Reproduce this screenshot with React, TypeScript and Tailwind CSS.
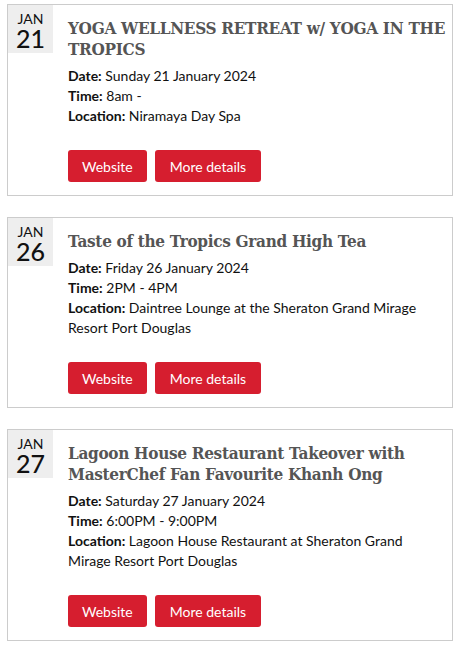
// ── EventList ──
// 活动列表：日期块 + 标题 + 详情 + 按钮

interface EventItem {
  readonly month: string;
  readonly day: string;
  readonly title: string;
  readonly date: string;
  readonly time: string;
  readonly location: string;
}

const events: EventItem[] = [
  {
    month: 'JAN',
    day: '21',
    title: 'YOGA WELLNESS RETREAT w/ YOGA IN THE TROPICS',
    date: 'Sunday 21 January 2024',
    time: '8am -',
    location: 'Niramaya Day Spa',
  },
  {
    month: 'JAN',
    day: '26',
    title: 'Taste of the Tropics Grand High Tea',
    date: 'Friday 26 January 2024',
    time: '2PM - 4PM',
    location: 'Daintree Lounge at the Sheraton Grand Mirage Resort Port Douglas',
  },
  {
    month: 'JAN',
    day: '27',
    title: 'Lagoon House Restaurant Takeover with MasterChef Fan Favourite Khanh Ong',
    date: 'Saturday 27 January 2024',
    time: '6:00PM - 9:00PM',
    location: 'Lagoon House Restaurant at Sheraton Grand Mirage Resort Port Douglas',
  },
];

function EventCard({ ev }: { ev: EventItem }) {
  return (
    <div className="flex border border-[#cccccc] bg-white">
      {/* 日期块 */}
      <div className="w-[45px] h-[48px] shrink-0 bg-[#eeeeee] flex flex-col items-center pt-[6px] text-[#111]">
        <span className="text-[14px] leading-[15px]">{ev.month}</span>
        <span className="text-[25px] leading-[24px] font-medium">{ev.day}</span>
      </div>

      {/* 内容 */}
      <div className="flex-1 pl-[15px] pr-0 pt-[13px] pb-[13px]">
        <h3 className="font-['DejaVu_Serif_Condensed','DejaVu_Serif',serif] font-bold text-[17px] leading-[21px] tracking-[-0.3px] text-[#555555]">
          {ev.title}
        </h3>
        <div className="mt-[6px] pr-[12px] text-[14px] leading-[20px] text-[#111]">
          <p><b>Date:</b> {ev.date}</p>
          <p><b>Time:</b> {ev.time}</p>
          <p><b>Location:</b> {ev.location}</p>
        </div>
        <div className="mt-[24px] flex gap-[8px]">
          <button className="h-[32px] px-[14px] rounded-[3px] bg-[#d61e2f] text-white text-[14px]">
            Website
          </button>
          <button className="h-[32px] px-[15px] rounded-[3px] bg-[#d61e2f] text-white text-[14px]">
            More details
          </button>
        </div>
      </div>
    </div>
  );
}

export default function App() {
  return (
    <div className="w-[456px] pt-[4px] pl-[7px] pr-[3px] flex flex-col gap-[21px] bg-white font-['Lato','Liberation_Sans',sans-serif]">
      {events.map((ev) => (
        <EventCard key={ev.day} ev={ev} />
      ))}
    </div>
  );
}
